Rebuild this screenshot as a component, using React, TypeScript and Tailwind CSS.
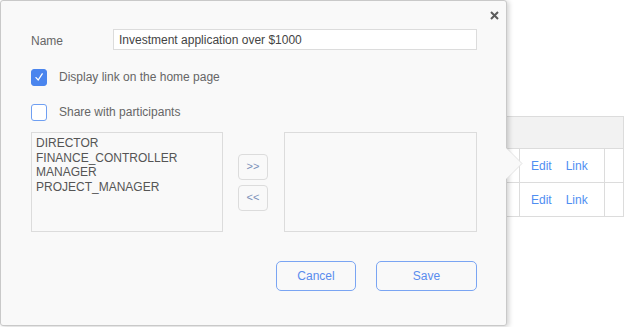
import React from 'react';

const roles = ['DIRECTOR', 'FINANCE_CONTROLLER', 'MANAGER', 'PROJECT_MANAGER'];

function BackgroundTable(): React.ReactElement {
  // the grid that sits behind the dialog
  const rows = [0, 1];
  return (
    <div className="ml-[400px] pt-[116px] w-[224px]">
      <div className="border-t border-r border-[#dcdcdc]">
        <div className="h-[32px] bg-[#f2f2f2] border-b border-[#dcdcdc]" />
        {rows.map((r) => (
          <div key={r} className="flex h-[34px] border-b border-[#dcdcdc]">
            <div className="w-[120px] border-r border-[#dcdcdc]" />
            <div className="w-[85px] flex items-center gap-[14px] pl-[11px] border-r border-[#dcdcdc] text-[12px] text-[#4f8ef2]">
              <span>Edit</span>
              <span>Link</span>
            </div>
            <div className="flex-1" />
          </div>
        ))}
      </div>
    </div>
  );
}

function Checkbox({ checked }: { checked: boolean }): React.ReactElement {
  return checked ? (
    <span className="w-[16px] h-[17px] rounded-[3px] bg-[#4a85ee] border border-[#4a85ee] flex items-center justify-center">
      <svg width="10" height="10" viewBox="0 0 10 10">
        <path d="M2 5.6 L4.2 8 L8.2 1.8" fill="none" stroke="#fff" strokeWidth="1.3" strokeLinecap="round" />
      </svg>
    </span>
  ) : (
    <span className="w-[16px] h-[17px] rounded-[3px] bg-white border border-[#6f9ff2]" />
  );
}

export default function App(): React.ReactElement {
  return (
    <div className="relative w-[624px] h-[327px] bg-white overflow-hidden font-['Liberation_Sans',Arial,sans-serif]">
      <BackgroundTable />

      {/* Dialog */}
      <div className="absolute left-0 top-0 w-[507px] h-[326px] bg-[#f9f9f9] border border-[#c9c9c9] rounded-[3px] shadow-[2px_1px_5px_rgba(0,0,0,0.18)]">
        <button className="absolute right-[7px] top-[9px] w-[10px] h-[10px] flex items-center justify-center">
          <svg width="9" height="9" viewBox="0 0 9 9">
            <path d="M1 1 L8 8 M8 1 L1 8" stroke="#5c5c5c" strokeWidth="2" />
          </svg>
        </button>

        {/* pointer to the table row */}
        <svg className="absolute left-[505px] top-[147px]" width="18" height="31" viewBox="0 0 18 31">
          <polygon points="0,0 16,15.5 0,31" fill="#f9f9f9" />
          <polyline points="1,0.5 16,15.5 1,30.5" fill="none" stroke="#e2e2e2" strokeWidth="1" />
        </svg>

        <div className="flex flex-col pl-[30px] pr-[29px] pt-[28px] text-[12px] text-[#666]">
          <div className="flex items-center h-[21px]">
            <span className="w-[82px] pt-[2px]">Name</span>
            <div className="flex-1 h-[21px] bg-white border border-[#dcdcdc] flex items-center pl-[5px] text-[#444]">
              Investment application over $1000
            </div>
          </div>

          <label className="flex items-center gap-[12px] mt-[18px]">
            <Checkbox checked />
            <span>Display link on the home page</span>
          </label>
          <label className="flex items-center gap-[12px] mt-[17px]">
            <Checkbox checked={false} />
            <span>Share with participants</span>
          </label>

          <div className="flex items-center mt-[11px]">
            <div className="w-[192px] h-[100px] border border-[#dcdcdc] pl-[4px] pt-[3px] leading-[14.5px] text-[#555]">
              {roles.map((r) => (
                <div key={r}>{r}</div>
              ))}
            </div>
            <div className="flex-1 flex flex-col items-center gap-[5px] pr-[1px]">
              <button className="w-[30px] h-[26px] rounded-[4px] border border-[#dcdcdc] text-[11px] text-[#7a8fb8]">&gt;&gt;</button>
              <button className="w-[30px] h-[26px] rounded-[4px] border border-[#dcdcdc] text-[11px] text-[#7a8fb8]">&lt;&lt;</button>
            </div>
            <div className="w-[193px] h-[100px] border border-[#dcdcdc]" />
          </div>

          <div className="flex justify-end gap-[20px] mt-[29px]">
            <button className="w-[80px] h-[30px] rounded-[5px] border border-[#7aa5f3] text-[12px] text-[#5a8cee]">Cancel</button>
            <button className="w-[101px] h-[30px] rounded-[5px] border border-[#7aa5f3] text-[12px] text-[#5a8cee]">Save</button>
          </div>
        </div>
      </div>
    </div>
  );
}
